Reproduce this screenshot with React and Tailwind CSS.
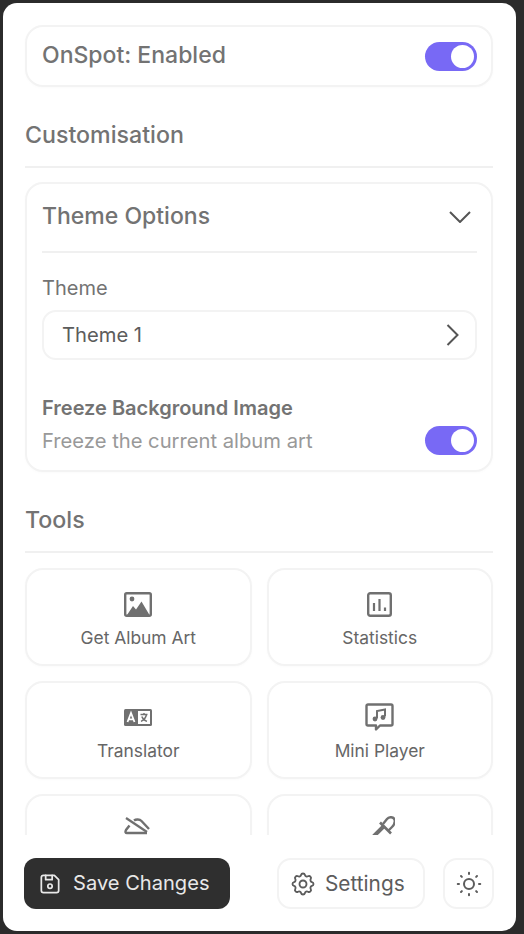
import React from "react";
import { TbDeviceFloppy, TbSettings, TbSun } from "react-icons/tb";

const cardClass = "rounded-[18px] border-2 border-[#f3f3f3] bg-white shadow-[0_1px_3px_rgba(0,0,0,0.02)]";

const Toggle = () => (
  <div className="flex h-[29px] w-[52px] items-center justify-end rounded-full bg-[#7869f5] pr-[3px]">
    <div className="h-[23px] w-[23px] rounded-full bg-white" />
  </div>
);

const ImageIcon = () => (
  <svg width="28" height="25" viewBox="0 0 28 25">
    <rect x="1.2" y="1.2" width="25.6" height="22.6" rx="1.5" fill="none" stroke="#707070" strokeWidth="2.4" />
    <circle cx="8" cy="7" r="2.4" fill="#707070" />
    <path d="M3 23 L9 14 L12 17.5 L17.5 9.5 L25.5 23 Z" fill="#707070" />
  </svg>
);

const StatsIcon = () => (
  <svg width="25" height="25" viewBox="0 0 25 25">
    <rect x="1.2" y="1.2" width="22.6" height="22.6" rx="2" fill="none" stroke="#707070" strokeWidth="2.4" />
    <path d="M7 11v8M12.5 7v12M18 15.5v3.5" fill="none" stroke="#707070" strokeWidth="2.2" />
  </svg>
);

const TranslateIcon = () => (
  <svg width="28" height="17" viewBox="0 0 28 17">
    <rect x="0" y="0" width="28" height="17" rx="1.5" fill="#707070" />
    <rect x="14" y="2" width="12" height="13" fill="#ffffff" />
    <path d="M3.5 13 L7 4 L10.5 13 M5 10.3h4" fill="none" stroke="#ffffff" strokeWidth="1.8" />
    <path d="M16.5 5.5h7M20 4v1.5M22.5 5.5c-.6 3.2-2.6 5.6-5.5 6.8M17.8 7.5c.8 2.2 2.6 4 5.2 4.8" fill="none" stroke="#707070" strokeWidth="1.4" />
  </svg>
);

const LyricsIcon = () => (
  <svg width="29" height="29" viewBox="0 0 29 29">
    <path d="M3 1.5h23a1.5 1.5 0 0 1 1.5 1.5v18a1.5 1.5 0 0 1-1.5 1.5H15l-4 4v-4H3A1.5 1.5 0 0 1 1.5 21V3A1.5 1.5 0 0 1 3 1.5Z" fill="none" stroke="#707070" strokeWidth="2.4" strokeLinejoin="round" />
    <path d="M12 15.5V8l8-1.5v7" fill="none" stroke="#707070" strokeWidth="2" />
    <circle cx="10" cy="16" r="2.4" fill="#707070" />
    <circle cx="18" cy="14.5" r="2.4" fill="#707070" />
  </svg>
);

const CloudOffIcon = () => (
  <svg width="28" height="29" viewBox="0 0 28 29">
    <path d="M2 2 L23 16" fill="none" stroke="#707070" strokeWidth="2.2" />
    <path d="M10 4.5 C12 3 15.5 3 17.5 5 L25 13 M5.5 9.5 L2 14 C1 16 1.5 17 3 17 H23" fill="none" stroke="#707070" strokeWidth="2.4" />
  </svg>
);

const PipetteIcon = () => (
  <svg width="30" height="29" viewBox="0 0 30 29">
    <path d="M18 8 L22 3 C24 0.5 28.5 0.5 29.5 3.5 C30.5 6.5 29 9 27 11 L23 15" fill="none" stroke="#707070" strokeWidth="2.4" />
    <path d="M15 6.5 L26 17.5" fill="none" stroke="#707070" strokeWidth="2.6" />
    <path d="M18.5 10.5 L4 25" fill="none" stroke="#707070" strokeWidth="4" />
  </svg>
);

const tools = [
  { id: "art", label: "Get Album Art", icon: <ImageIcon /> },
  { id: "stats", label: "Statistics", icon: <StatsIcon /> },
  { id: "translate", label: "Translator", icon: <TranslateIcon /> },
  { id: "mini", label: "Mini Player", icon: <LyricsIcon /> },
  { id: "cloud", icon: <CloudOffIcon /> },
  { id: "pipette", icon: <PipetteIcon /> },
];

const App = () => {
  return (
    <div className="h-[934px] w-[524px] bg-[#2b2b2b] pl-[3px] pt-[3px] font-['Inter',sans-serif]">
      <div className="flex h-[928px] w-[513px] flex-col overflow-hidden rounded-[14px] bg-white">
        <div className="h-[832px] overflow-hidden pl-[22px] pr-[23px] pt-[22px]">
          <div className={`${cardClass} flex h-[62px] items-center justify-between pl-[15px] pr-[14px]`}>
            <span className="relative top-[-1px] text-[23px] font-medium text-[#737373]">OnSpot: Enabled</span>
            <Toggle />
          </div>

          <h2 className="mt-[33px] h-[30px] text-[23.2px] leading-[30px] font-medium text-[#737373]">Customisation</h2>
          <div className="mt-[16px] h-[2px] bg-[#f0f0f0]" />

          <div className={`${cardClass} mt-[14px] h-[290px] pl-[15px] pr-[14px]`}>
            <div className="flex h-[68.5px] items-center justify-between border-b-2 border-[#f0f0f0] pr-[6px]">
              <span className="relative top-[-1px] text-[23px] font-medium text-[#737373]">Theme Options</span>
              <svg width="22" height="12" viewBox="0 0 22 12">
                <path d="M1 1 L11 11 L21 1" fill="none" stroke="#555555" strokeWidth="2" />
              </svg>
            </div>
            <div className="mt-[22px] text-[20px] leading-[26px] text-[#737373]">Theme</div>
            <div className="mt-[9px] flex h-[50.5px] items-center justify-between rounded-[14px] border-2 border-[#f3f3f3] pl-[18px] pr-[16.5px]">
              <span className="text-[20.2px] text-[#5c5c5c]">Theme 1</span>
              <svg width="13" height="22" viewBox="0 0 13 22">
                <path d="M1.5 1 L11.5 11 L1.5 21" fill="none" stroke="#555555" strokeWidth="2" />
              </svg>
            </div>
            <div className="mt-[34.5px] text-[20px] leading-[26px] font-semibold text-[#737373]">Freeze Background Image</div>
            <div className="mt-[5px] flex items-center justify-between">
              <span className="text-[20.2px] text-[#999999]">Freeze the current album art</span>
              <Toggle />
            </div>
          </div>

          <h2 className="mt-[33px] h-[30px] text-[23.2px] leading-[30px] font-medium text-[#737373]">Tools</h2>
          <div className="mt-[16px] h-[2px] bg-[#f0f0f0]" />

          <div className="mt-[15px] grid grid-cols-2 gap-x-[15px] gap-y-[15px]">
            {tools.map((tool) => (
              <div key={tool.id} className={`${cardClass} flex h-[98px] flex-col items-center`}>
                <div className="mt-[20px] flex h-[29px] items-center">{tool.icon}</div>
                {tool.label && <div className="mt-[7px] text-[17.4px] leading-[24px] text-[#666666]">{tool.label}</div>}
              </div>
            ))}
          </div>
        </div>

        <div className="flex flex-1 items-start pl-[21px] pr-[22px] pt-[23px]">
          <button className="flex h-[51px] w-[207px] items-center gap-[10px] rounded-[12px] bg-[#2f2f2f] pl-[13px] text-[20.1px] text-[#e8e8e8]">
            <TbDeviceFloppy size={26} strokeWidth={1.6} />
            Save Changes
          </button>
          <button className="ml-[46.5px] flex h-[51px] w-[148.5px] items-center gap-[8px] rounded-[14px] border-2 border-[#f3f3f3] pl-[10px] text-[20.8px] text-[#5c5c5c]">
            <TbSettings size={28} strokeWidth={1.6} />
            Settings
          </button>
          <button className="ml-[18px] flex h-[51px] w-[51px] items-center justify-center rounded-[14px] border-2 border-[#f3f3f3] text-[#5c5c5c]">
            <TbSun size={30} strokeWidth={1.6} />
          </button>
        </div>
      </div>
    </div>
  );
};

export default App;
